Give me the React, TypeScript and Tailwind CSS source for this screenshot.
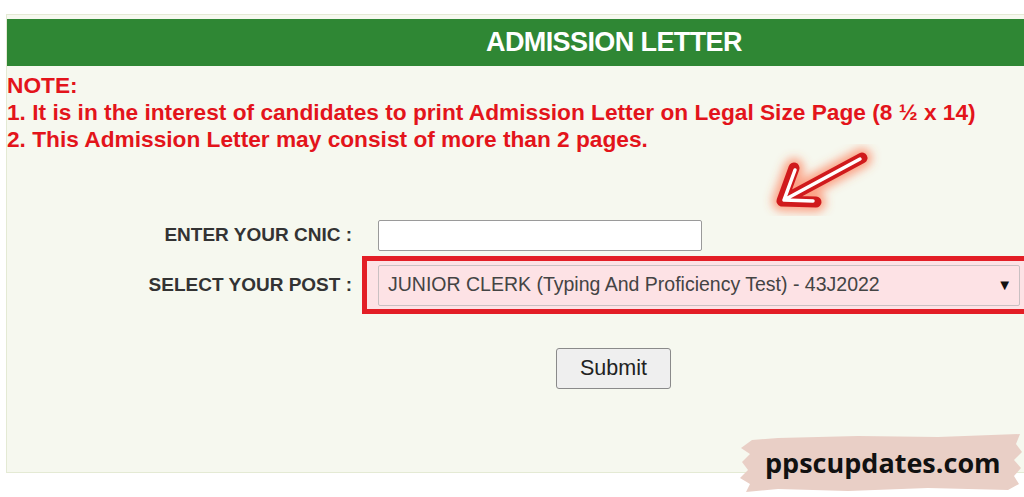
import React from "react";

const arial = { fontFamily: '"Liberation Sans", Arial, sans-serif' };

function Arrow() {
  return (
    <svg
      className="absolute left-[760px] top-[140px]"
      width="130"
      height="80"
      viewBox="760 140 130 80"
    >
      <defs>
        <filter id="glow" x="-30%" y="-30%" width="160%" height="160%">
          <feGaussianBlur stdDeviation="5" />
        </filter>
      </defs>
      <g fill="none" strokeLinecap="round" strokeLinejoin="round">
        <path
          d="M862 158 L782 201 M794 168 L782 201 L816 202"
          stroke="#ff6a40"
          strokeOpacity="0.6"
          strokeWidth="20"
          filter="url(#glow)"
        />
        <path
          d="M862 158 L782 201 M794 168 L782 201 L816 202"
          stroke="#d01a1c"
          strokeWidth="11"
        />
        <path
          d="M860 159 L784 200 M795 170 L784 200 L813 201"
          stroke="#ffffff"
          strokeWidth="3.5"
        />
      </g>
    </svg>
  );
}

function Watermark() {
  return (
    <div className="absolute left-[738px] top-[430px] h-[64px] w-[286px]">
      <svg className="absolute inset-0" width="286" height="64" viewBox="0 0 286 64">
        <path
          d="M14 10 L40 8 L120 6 L200 7 L282 4 L278 14 L284 22 L276 30 L283 38 L276 46 L281 54 L270 60 L190 58 L110 61 L40 59 L8 62 L12 54 L2 48 L10 40 L4 32 L12 24 L3 18 Z"
          fill="#e9cfc6"
        />
      </svg>
      <div
        className="relative flex h-full items-center pl-[27px] text-[27px] font-bold leading-none text-[#111]"
        style={{ fontFamily: '"Open Sans", sans-serif' }}
      >
        ppscupdates.com
      </div>
    </div>
  );
}

export default function App() {
  return (
    <div className="relative h-[497px] w-[1024px] overflow-hidden bg-white" style={arial}>
      <div className="ml-[6px] mt-[14px] h-[459px] w-[1040px] border border-[#e4ead4] bg-[#f6f8ef] pt-[4px]">
        <div className="flex h-[47px] items-center bg-[#2f8734] pl-[479px] text-[27px] font-bold tracking-[-0.6px] text-white">
          ADMISSION LETTER
        </div>

        <div className="pt-[6px] text-[22.7px] font-bold leading-[27px] text-[#e3141b]">
          <div>NOTE:</div>
          <div>1. It is in the interest of candidates to print Admission Letter on Legal Size Page (8 ½ x 14)</div>
          <div>2. This Admission Letter may consist of more than 2 pages.</div>
        </div>

        <div className="mt-[67px] flex flex-col">
          <div className="flex h-[31px] items-center">
            <div className="w-[346px] shrink-0 pr-[1px] text-right text-[19px] font-bold text-[#333]">
              ENTER YOUR CNIC :
            </div>
            <div className="ml-[25px] h-[31px] w-[324px] shrink-0 rounded-[2px] border border-[#9a9a9a] bg-white" />
          </div>

          <div className="mt-[5px] flex h-[58px] items-center">
            <div className="w-[346px] shrink-0 pr-[1px] text-right text-[19px] font-bold text-[#333]">
              SELECT YOUR POST :
            </div>
            <div className="ml-[9px] flex h-[58px] w-[700px] shrink-0 items-center border-[5px] border-[#e31e26] bg-[#fde2e5] pl-[11px]">
              <div className="flex h-[41px] w-[642px] shrink-0 items-center justify-between rounded-[2px] border border-[#c9c0c2] pl-[9px] pr-[7px] text-[19.5px] text-[#444]">
                <span>JUNIOR CLERK (Typing And Proficiency Test) - 43J2022</span>
                <span className="text-[15px] text-[#111]">▼</span>
              </div>
            </div>
          </div>

          <div className="mt-[34px] flex">
            <button className="ml-[549px] h-[41px] w-[115px] rounded-[3px] border border-[#8a8a8a] bg-[#efefef] text-[21.5px] text-[#222]">
              Submit
            </button>
          </div>
        </div>
      </div>

      <Arrow />
      <Watermark />
    </div>
  );
}
